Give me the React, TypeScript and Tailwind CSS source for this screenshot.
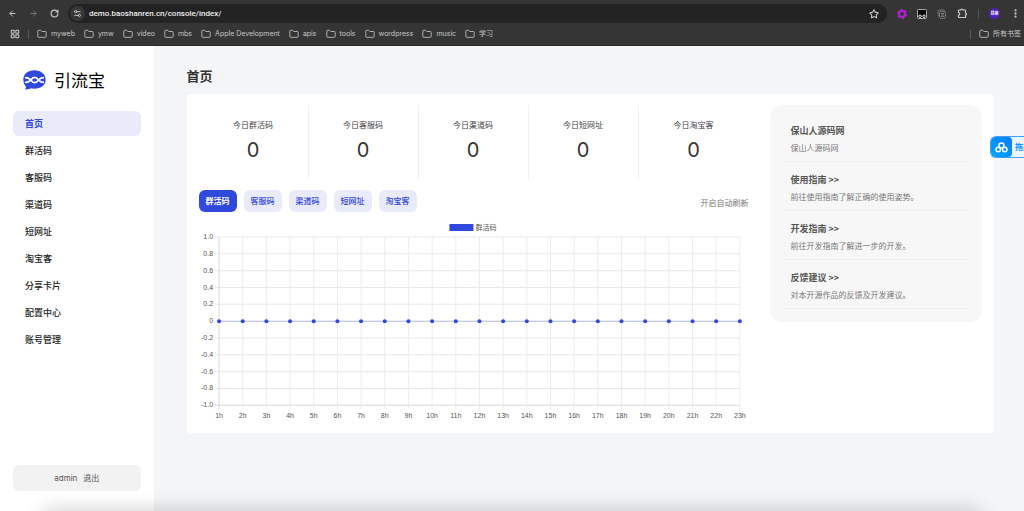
import type { ReactNode } from 'react';
import { ArrowLeft, ArrowRight, EllipsisVertical, Folder, LayoutGrid, RotateCw, Settings2, Star } from 'lucide-react';

const bookmarks = ['myweb', 'ymw', 'video', 'mbs', 'Apple Development', 'apis', 'tools', 'wordpress', 'music', '学习'];
const menu = ['首页', '群活码', '客服码', '渠道码', '短网址', '淘宝客', '分享卡片', '配置中心', '账号管理'];
const stats = ['今日群活码', '今日客服码', '今日渠道码', '今日短网址', '今日淘宝客'];
const tabs = ['群活码', '客服码', '渠道码', '短网址', '淘宝客'];
const links = [
  { title: '保山人源码网', desc: '保山人源码网' },
  { title: '使用指南 >>', desc: '前往使用指南了解正确的使用姿势。' },
  { title: '开发指南 >>', desc: '前往开发指南了解进一步的开发。' },
  { title: '反馈建议 >>', desc: '对本开源作品的反馈及开发建议。' },
];

const IconButton = ({ label, children }: { label: string; children: ReactNode }) => (
  <button type="button" aria-label={label} className="flex shrink-0 items-center justify-center">
    {children}
  </button>
);

const BrowserBar = () => {
  return (
    <header className="shrink-0 border-b border-[#2c2c2c] bg-[#353535] font-['Inter','Noto_Sans_CJK_SC',sans-serif] text-[#c7c7c7]">
      <div className="flex items-center pt-1 pr-[3px]">
        <div className="flex items-center gap-3 pl-2">
          <IconButton label="Back"><ArrowLeft size={9} strokeWidth={2.5} /></IconButton>
          <IconButton label="Forward"><ArrowRight size={9} strokeWidth={2.5} className="text-[#777777]" /></IconButton>
          <IconButton label="Reload"><RotateCw size={9} strokeWidth={3} /></IconButton>
        </div>
        <div className="ml-[9px] flex h-[19px] flex-1 items-center rounded-full bg-[#232323] pr-2 pl-[2px]">
          <span className="flex size-[15px] items-center justify-center rounded-full bg-[#383838]">
            <Settings2 size={9} strokeWidth={2.5} className="rotate-180" />
          </span>
          <input
            aria-label="Address"
            defaultValue="demo.baoshanren.cn/console/index/"
            className="ml-1 min-w-0 flex-1 bg-transparent font-['Roboto',sans-serif] text-[8px] font-medium text-[#eeeeee] outline-none"
          />
          <IconButton label="Bookmark"><Star size={10} strokeWidth={2.5} /></IconButton>
        </div>
        <div className="flex items-center gap-[10px] pl-[10px]">
          <IconButton label="Flower">
            <svg width="10" height="10" viewBox="0 0 20 20" fill="none" stroke="#b01fd0" strokeWidth="4">
              <circle cx="10" cy="10" r="6" />
              <circle cx="10" cy="10" r="8" strokeDasharray="4.2 4.2" />
            </svg>
          </IconButton>
          <IconButton label="Tampermonkey">
            <svg width="10" height="10" viewBox="0 0 20 20">
              <rect x="1" y="1" width="18" height="18" rx="2" fill="#050505" stroke="#d5d5d5" strokeWidth="1.5" />
              <circle cx="6" cy="14.5" r="2.5" fill="#050505" stroke="#f0f0f0" strokeWidth="2" />
              <circle cx="14" cy="14.5" r="2.5" fill="#050505" stroke="#f0f0f0" strokeWidth="2" />
            </svg>
          </IconButton>
          <IconButton label="Clip">
            <svg width="10" height="10" viewBox="0 0 20 20" fill="none" stroke="#7b7b7b" strokeWidth="2">
              <path d="M5 15a4 4 0 0 1-3-4V6a4 4 0 0 1 4-4h6a4 4 0 0 1 4 3" />
              <rect x="5" y="5" width="12" height="14" rx="4" />
              <path d="M8 9h6M8 12h6M8 15h6" />
            </svg>
          </IconButton>
          <IconButton label="Extensions">
            <svg width="11" height="11" viewBox="0 0 22 22" fill="none" stroke="currentColor" strokeWidth="2.4" strokeLinejoin="round">
              <path d="M3 4h5a2 2 0 0 1 4 0h5v6a2 2 0 0 1 0 4v5H3v-5a2.500 2.500 0 0 0 0-5z" />
            </svg>
          </IconButton>
          <span className="h-[10px] w-px bg-[#555555]" />
          <button type="button" className="flex size-[11px] items-center justify-center rounded-full bg-[#5420b8] text-[4px] font-bold text-white">
            昆荣
          </button>
          <IconButton label="Menu"><EllipsisVertical size={11} strokeWidth={3} /></IconButton>
        </div>
      </div>
      <nav className="flex h-[22px] items-center pr-[3px] pl-[10px] text-[7px] leading-[10px]">
        <IconButton label="Apps"><LayoutGrid size={10} strokeWidth={2.5} /></IconButton>
        <span className="mx-2 h-[9px] w-px bg-[#585858]" />
        <div className="flex items-center gap-[9px]">
          {bookmarks.map((name) => (
            <a key={name} href="#" className="flex items-center gap-1 whitespace-nowrap">
              <Folder size={10} strokeWidth={2} />
              {name}
            </a>
          ))}
        </div>
        <span className="mr-2 ml-auto h-[9px] w-px bg-[#585858]" />
        <a href="#" className="flex items-center gap-1 whitespace-nowrap">
          <Folder size={10} strokeWidth={2} />
          所有书签
        </a>
      </nav>
    </header>
  );
};

const Logo = () => (
  <div className="flex items-center gap-2 pl-[23px]">
    <svg width="23" height="20" viewBox="0 0 69 60">
      <path d="M34 1C15 1 1 12 1 29c0 9 4 16 7 20 2 4 0 7-3 9 8 1 15-1 19-3 3 1 7 1 10 1 20 0 34-11 34-27S54 1 34 1z" fill="#3148dc" />
      <g fill="none" stroke="#fff" strokeWidth="5" strokeLinecap="round">
        <path d="M8 23c9 0 11 3 15 7s6 8 12 8 9-4 12-8 6-7 14-7" />
        <path d="M8 37c9 0 11-3 15-7s6-8 12-8 9 4 12 8 6 7 14 7" />
      </g>
    </svg>
    <span className="text-[17px] leading-5 text-black">引流宝</span>
  </div>
);

const Sidebar = () => {
  return (
    <aside className="flex w-[15%] shrink-0 flex-col bg-white pt-6 pb-5">
      <Logo />
      <nav className="mt-[21px] flex flex-col gap-[2px] px-[13px] text-[9px]">
        {menu.map((item, i) => (
          <a
            key={item}
            href="#"
            className={
              i === 0
                ? 'flex h-[25px] items-center rounded-md bg-[#e9ebfb] pl-3 font-bold text-[#3148dc]'
                : 'flex h-[25px] items-center rounded-md pl-3 font-medium text-[#222222]'
            }
          >
            {item}
          </a>
        ))}
      </nav>
      <button type="button" className="mx-[13px] mt-auto flex h-[26px] items-center justify-center gap-[6px] rounded-md bg-[#f2f2f2] text-[8px] text-[#555555]">
        <span className="font-['Inter',sans-serif]">admin</span>
        <span>退出</span>
      </button>
    </aside>
  );
};

const Chart = () => {
  const left = 20;
  const right = 540;
  const top = 17;
  const bottom = 185;
  const hours = Array.from({ length: 23 }, (_, i) => i + 1);
  const values = ['1.0', '0.8', '0.6', '0.4', '0.2', '0', '-0.2', '-0.4', '-0.6', '-0.8', '-1.0'];
  const x = (i: number) => left + (i * (right - left)) / 22;
  const y = (i: number) => top + (i * (bottom - top)) / 10;

  return (
    <svg viewBox="0 0 549 201" className="mt-2 block w-full font-['Liberation_Sans','Noto_Sans_CJK_SC',sans-serif] text-[7px]" fill="#555555">
      <rect x="250" y="4" width="24" height="7" fill="#3148dc" />
      <text x="276" y="10">群活码</text>
      {values.map((v, i) => (
        <g key={v}>
          <line x1={left - 4} x2={right} y1={y(i)} y2={y(i)} stroke={i === 10 ? '#d8d8d8' : '#e9e9e9'} />
          <text x={left - 6} y={y(i) + 2} textAnchor="end">{v}</text>
        </g>
      ))}
      {hours.map((h, i) => (
        <g key={h}>
          <line x1={x(i)} x2={x(i)} y1={top} y2={bottom + 4} stroke={i === 0 ? '#d8d8d8' : '#ededed'} />
          <text x={x(i)} y={bottom + 13} textAnchor="middle">{h}h</text>
        </g>
      ))}
      <line x1={left} x2={right} y1={y(5)} y2={y(5)} stroke="#b9c1f1" />
      {hours.map((h, i) => (
        <circle key={h} cx={x(i)} cy={y(5)} r="2" fill="#3148dc" />
      ))}
    </svg>
  );
};

const NetdiskWidget = () => (
  <button type="button" className="absolute top-[136px] right-0 flex h-[22px] w-[34px] items-center overflow-hidden rounded-l-md border border-r-0 border-[#3fa0ff] bg-[#eaf6ff] text-[8px] font-bold text-[#1493ff]">
    <span className="flex h-full w-[21px] shrink-0 items-center justify-center rounded-r-sm bg-linear-to-tr from-[#05a8ff] to-[#0878ff]">
      <svg width="13" height="11" viewBox="0 0 26 22" fill="none" stroke="#fff" strokeWidth="3">
        <circle cx="13" cy="7" r="5" />
        <circle cx="6.5" cy="15" r="4.5" />
        <circle cx="19.5" cy="15" r="4.5" />
      </svg>
    </span>
    <span className="ml-[3px] shrink-0 whitespace-nowrap">拖拽</span>
  </button>
);

export default function App() {
  return (
    <div className="relative flex min-h-screen flex-col overflow-hidden bg-[#f4f5f7] font-['Noto_Sans_CJK_SC',sans-serif]">
      <BrowserBar />
      <div className="flex flex-1">
        <Sidebar />
        <main className="min-w-0 flex-1 pt-5 pr-[30px] pl-[33px]">
          <h1 className="text-[13px] leading-5 font-bold text-[#333333]">首页</h1>
          <section className="mt-2 flex items-start gap-[22px] rounded bg-white px-3 pt-[11px] pb-3">
            <div className="min-w-0 flex-1">
              <div className="grid grid-cols-5 divide-x divide-[#f0f0f0]">
                {stats.map((label) => (
                  <div key={label} className="flex h-[74px] flex-col items-center pt-3 text-[#333333]">
                    <span className="text-[8px] leading-4 text-[#444444]">{label}</span>
                    <span className="mt-1 font-['Inter',sans-serif] text-[20px] leading-[26px]">0</span>
                  </div>
                ))}
              </div>
              <div className="mt-[11px] flex items-center gap-[7px]">
                {tabs.map((tab, i) => (
                  <button
                    key={tab}
                    type="button"
                    className={
                      i === 0
                        ? 'h-[22px] w-[38px] rounded-md bg-[#3148dc] text-[8px] font-bold text-white'
                        : 'h-[22px] w-[38px] rounded-md bg-[#e9ebfb] text-[8px] font-medium text-[#3148dc]'
                    }
                  >
                    {tab}
                  </button>
                ))}
                <button type="button" className="ml-auto pt-1 text-[8px] text-[#777777]">开启自动刷新</button>
              </div>
              <Chart />
            </div>
            <div className="w-[27%] shrink-0 rounded-[13px] bg-[#f7f7f7] px-3 pt-2 pb-[13px]">
              {links.map((item) => (
                <a key={item.title} href="#" className="block border-b border-[#eeeeee] px-2 pt-[11px] pb-[7px]">
                  <h3 className="text-[9px] leading-[13px] font-bold text-[#555555]">{item.title}</h3>
                  <p className="mt-1 text-[8px] leading-[13px] text-[#777777]">{item.desc}</p>
                </a>
              ))}
            </div>
          </section>
        </main>
      </div>
      <NetdiskWidget />
      <div className="pointer-events-none absolute right-12 -bottom-4 left-12 h-3 shadow-[0_0_20px_4px_rgba(0,0,0,0.22)]" />
    </div>
  );
}
